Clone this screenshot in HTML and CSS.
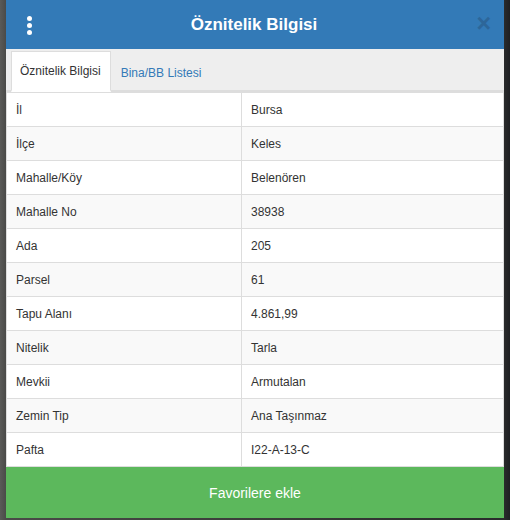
FILE: index.html
```html
<!DOCTYPE html>
<html lang="tr">
<head>
<meta charset="utf-8">
<link rel="stylesheet" href="styles.css">
</head>
<body>
<div class="panel">
  <div class="header">
    <span class="kebab"><i></i><i></i><i></i></span>
    <span class="title">Öznitelik Bilgisi</span>
    <span class="close">×</span>
  </div>
  <div class="tabs">
    <span class="tab active">Öznitelik Bilgisi</span>
    <span class="tab">Bina/BB Listesi</span>
  </div>
  <table class="attrs">
    <tr><td>İl</td><td>Bursa</td></tr>
    <tr><td>İlçe</td><td>Keles</td></tr>
    <tr><td>Mahalle/Köy</td><td>Belenören</td></tr>
    <tr><td>Mahalle No</td><td>38938</td></tr>
    <tr><td>Ada</td><td>205</td></tr>
    <tr><td>Parsel</td><td>61</td></tr>
    <tr><td>Tapu Alanı</td><td>4.861,99</td></tr>
    <tr><td>Nitelik</td><td>Tarla</td></tr>
    <tr><td>Mevkii</td><td>Armutalan</td></tr>
    <tr><td>Zemin Tip</td><td>Ana Taşınmaz</td></tr>
    <tr><td>Pafta</td><td>I22-A-13-C</td></tr>
  </table>
  <div class="fav">Favorilere ekle</div>
</div>
</body>
</html>
```
FILE: styles.css
```css
html, body {
  margin: 0;
  padding: 0;
}
body {
  width: 510px;
  height: 520px;
  overflow: hidden;
  background: linear-gradient(90deg, #5a5a58 0, #4a4a48 6px, #3b3c3a 50%, #2a2b2c 504px, #1e1f22 100%);
  font-family: "Liberation Sans", Arial, sans-serif;
}
.panel {
  margin-left: 6px;
  width: 498px;
  height: 518px;
  display: flex;
  flex-direction: column;
  background: #fff;
}
.header {
  height: 49px;
  background: #337ab7;
  display: flex;
  align-items: center;
  justify-content: center;
  position: relative;
  color: #fff;
}
.title {
  font-size: 17px;
  font-weight: bold;
  margin-right: 2px;
}
.kebab {
  position: absolute;
  left: 21px;
  top: 16px;
  display: flex;
  flex-direction: column;
  gap: 2px;
}
.kebab i {
  width: 5px;
  height: 5px;
  border-radius: 50%;
  background: #fff;
}
.close {
  position: absolute;
  right: 13px;
  top: 11px;
  font-size: 25px;
  font-weight: bold;
  color: #2b6090;
  opacity: 0.75;
  line-height: 25px;
}
.tabs {
  height: 41px;
  background: #eeeeee;
  border-bottom: 2px solid #dddddd;
  display: flex;
  align-items: flex-end;
  padding-left: 5px;
  box-sizing: content-box;
}
.tab {
  font-size: 12px;
  line-height: 16px;
  padding: 11px 10px 11px 10px;
  color: #337ab7;
  margin-bottom: -2px;
}
.tab.active {
  background: #fff;
  color: #333;
  border: 1px solid #dddddd;
  border-bottom: 2px solid #fff;
  padding-left: 8px;
  padding-right: 9px;
}
.attrs {
  width: 100%;
  border-collapse: collapse;
  font-size: 12px;
  color: #333;
}
.attrs td {
  border: 1px solid #dddddd;
  padding: 8px 9px;
  line-height: 16px;
  height: 17px;
}
.attrs td:first-child {
  width: 216px;
}
.attrs tr:nth-child(even) td {
  background: #f9f9f9;
}
.fav {
  flex: 1;
  background: #5cb85c;
  color: #fff;
  font-size: 14px;
  display: flex;
  align-items: center;
  justify-content: center;
}
```
